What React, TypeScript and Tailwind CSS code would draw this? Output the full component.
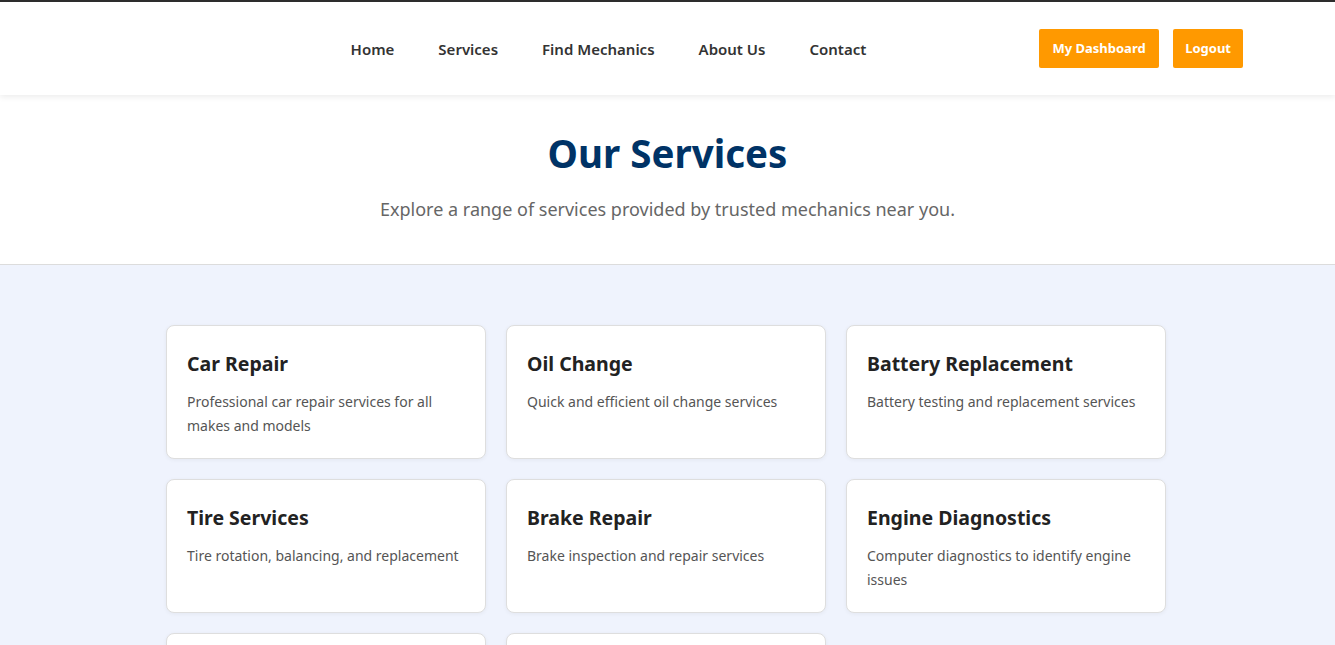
const services = [
  { title: "Car Repair", description: "Professional car repair services for all makes and models" },
  { title: "Oil Change", description: "Quick and efficient oil change services" },
  { title: "Battery Replacement", description: "Battery testing and replacement services" },
  { title: "Tire Services", description: "Tire rotation, balancing, and replacement" },
  { title: "Brake Repair", description: "Brake inspection and repair services" },
  { title: "Engine Diagnostics", description: "Computer diagnostics to identify engine issues" },
  { title: "AC Repair", description: "Air conditioning inspection and repair services" },
  { title: "Towing", description: "Emergency towing services available around the clock" },
];

const navLinks = ["Home", "Services", "Find Mechanics", "About Us", "Contact"];

function Navbar() {
  return (
    <header className="relative z-10 h-[95px] border-t-2 border-[#2d2d2d] bg-white shadow-[0_2px_6px_rgba(0,0,0,0.08)]">
      <div className="flex h-full items-center justify-between px-[92px]">
        <div className="w-[86px]" />
        <nav className="flex items-center gap-[44px] pt-[2px]">
          {navLinks.map((link) => (
            <a key={link} href="#" className="text-[15px] font-semibold text-[#333]">
              {link}
            </a>
          ))}
        </nav>
        <div className="flex items-center gap-[14px]">
          <button className="h-[39px] rounded-[2px] bg-[#ff9900] px-[13.5px] text-[13px] font-bold text-white">
            My Dashboard
          </button>
          <button className="h-[39px] rounded-[2px] bg-[#ff9900] px-[12px] text-[13px] font-bold text-white">
            Logout
          </button>
        </div>
      </div>
    </header>
  );
}

export default function App() {
  return (
    <div className="min-h-screen bg-[#eff3fd] font-['Noto_Sans',sans-serif]">
      <Navbar />

      <section className="border-b border-[#dcdcdc] bg-white pb-[41px] pt-[34px] text-center">
        <h1 className="text-[38.5px] font-bold leading-[48px] text-[#003366]">Our Services</h1>
        <p className="mt-[19px] text-[18px] leading-[27px] text-[#666]">
          Explore a range of services provided by trusted mechanics near you.
        </p>
      </section>

      <section className="pb-[60px] pr-[3px] pt-[60px]">
        <div className="mx-auto grid w-[1000px] grid-cols-3 gap-5">
          {services.map((service) => (
            <div
              key={service.title}
              className="rounded-lg border border-[#dedede] bg-white px-5 pb-5 pt-[23px] shadow-[0_1px_4px_rgba(0,0,0,0.05)]"
            >
              <h3 className="mb-[11px] text-[19.5px] font-bold leading-[30px] text-[#222]">{service.title}</h3>
              <p className="text-[14px] leading-6 text-[#555]">{service.description}</p>
            </div>
          ))}
        </div>
      </section>
    </div>
  );
}
